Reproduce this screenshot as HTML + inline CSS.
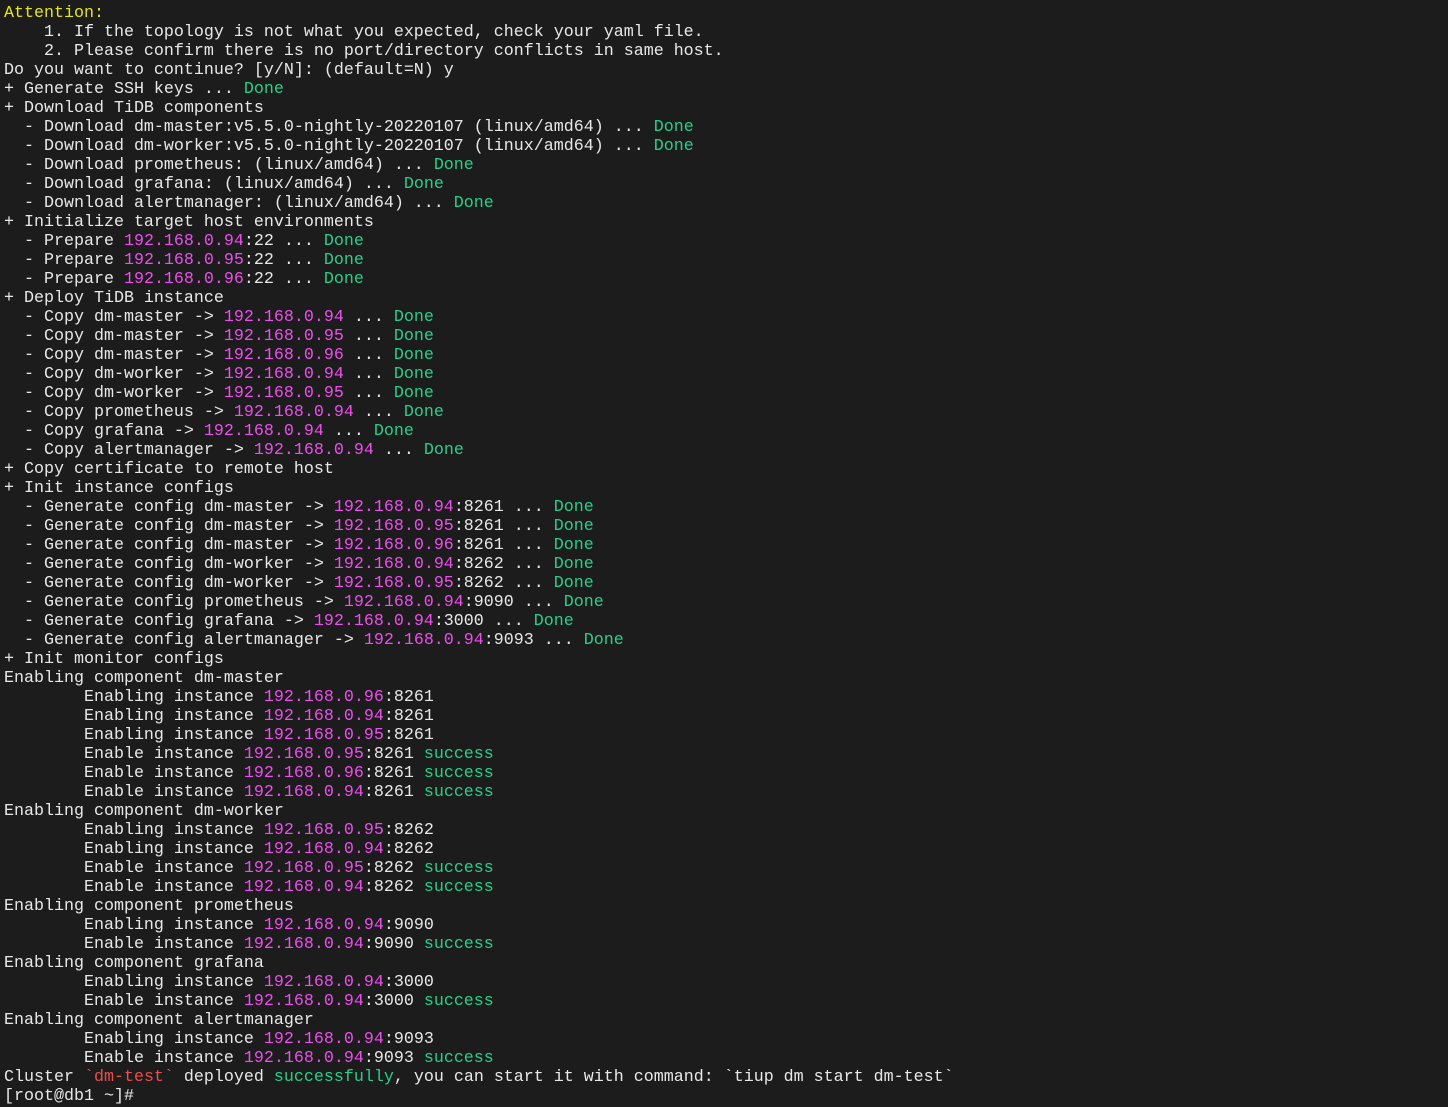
<!DOCTYPE html>
<html><head><meta charset="utf-8"><style>
html,body{margin:0;padding:0;background:#1c1c1c;width:1448px;height:1107px;overflow:hidden}
pre{margin:0;position:absolute;left:4px;top:4px;font-family:"Liberation Mono",monospace;font-size:16.67px;line-height:19px;color:#e8e8e8;white-space:pre}
.y{color:#e5e510}.g{color:#23d18b}.m{color:#f14cf1}.r{color:#f14c4c}
</style></head><body><pre><span class="y">Attention:</span>
    1. If the topology is not what you expected, check your yaml file.
    2. Please confirm there is no port/directory conflicts in same host.
Do you want to continue? [y/N]: (default=N) y
+ Generate SSH keys ... <span class="g">Done</span>
+ Download TiDB components
  - Download dm-master:v5.5.0-nightly-20220107 (linux/amd64) ... <span class="g">Done</span>
  - Download dm-worker:v5.5.0-nightly-20220107 (linux/amd64) ... <span class="g">Done</span>
  - Download prometheus: (linux/amd64) ... <span class="g">Done</span>
  - Download grafana: (linux/amd64) ... <span class="g">Done</span>
  - Download alertmanager: (linux/amd64) ... <span class="g">Done</span>
+ Initialize target host environments
  - Prepare <span class="m">192.168.0.94</span>:22 ... <span class="g">Done</span>
  - Prepare <span class="m">192.168.0.95</span>:22 ... <span class="g">Done</span>
  - Prepare <span class="m">192.168.0.96</span>:22 ... <span class="g">Done</span>
+ Deploy TiDB instance
  - Copy dm-master -> <span class="m">192.168.0.94</span> ... <span class="g">Done</span>
  - Copy dm-master -> <span class="m">192.168.0.95</span> ... <span class="g">Done</span>
  - Copy dm-master -> <span class="m">192.168.0.96</span> ... <span class="g">Done</span>
  - Copy dm-worker -> <span class="m">192.168.0.94</span> ... <span class="g">Done</span>
  - Copy dm-worker -> <span class="m">192.168.0.95</span> ... <span class="g">Done</span>
  - Copy prometheus -> <span class="m">192.168.0.94</span> ... <span class="g">Done</span>
  - Copy grafana -> <span class="m">192.168.0.94</span> ... <span class="g">Done</span>
  - Copy alertmanager -> <span class="m">192.168.0.94</span> ... <span class="g">Done</span>
+ Copy certificate to remote host
+ Init instance configs
  - Generate config dm-master -> <span class="m">192.168.0.94</span>:8261 ... <span class="g">Done</span>
  - Generate config dm-master -> <span class="m">192.168.0.95</span>:8261 ... <span class="g">Done</span>
  - Generate config dm-master -> <span class="m">192.168.0.96</span>:8261 ... <span class="g">Done</span>
  - Generate config dm-worker -> <span class="m">192.168.0.94</span>:8262 ... <span class="g">Done</span>
  - Generate config dm-worker -> <span class="m">192.168.0.95</span>:8262 ... <span class="g">Done</span>
  - Generate config prometheus -> <span class="m">192.168.0.94</span>:9090 ... <span class="g">Done</span>
  - Generate config grafana -> <span class="m">192.168.0.94</span>:3000 ... <span class="g">Done</span>
  - Generate config alertmanager -> <span class="m">192.168.0.94</span>:9093 ... <span class="g">Done</span>
+ Init monitor configs
Enabling component dm-master
        Enabling instance <span class="m">192.168.0.96</span>:8261
        Enabling instance <span class="m">192.168.0.94</span>:8261
        Enabling instance <span class="m">192.168.0.95</span>:8261
        Enable instance <span class="m">192.168.0.95</span>:8261 <span class="g">success</span>
        Enable instance <span class="m">192.168.0.96</span>:8261 <span class="g">success</span>
        Enable instance <span class="m">192.168.0.94</span>:8261 <span class="g">success</span>
Enabling component dm-worker
        Enabling instance <span class="m">192.168.0.95</span>:8262
        Enabling instance <span class="m">192.168.0.94</span>:8262
        Enable instance <span class="m">192.168.0.95</span>:8262 <span class="g">success</span>
        Enable instance <span class="m">192.168.0.94</span>:8262 <span class="g">success</span>
Enabling component prometheus
        Enabling instance <span class="m">192.168.0.94</span>:9090
        Enable instance <span class="m">192.168.0.94</span>:9090 <span class="g">success</span>
Enabling component grafana
        Enabling instance <span class="m">192.168.0.94</span>:3000
        Enable instance <span class="m">192.168.0.94</span>:3000 <span class="g">success</span>
Enabling component alertmanager
        Enabling instance <span class="m">192.168.0.94</span>:9093
        Enable instance <span class="m">192.168.0.94</span>:9093 <span class="g">success</span>
Cluster <span class="r">`dm-test`</span> deployed <span class="g">successfully</span>, you can start it with command: `tiup dm start dm-test`
[root@db1 ~]#</pre></body></html>
